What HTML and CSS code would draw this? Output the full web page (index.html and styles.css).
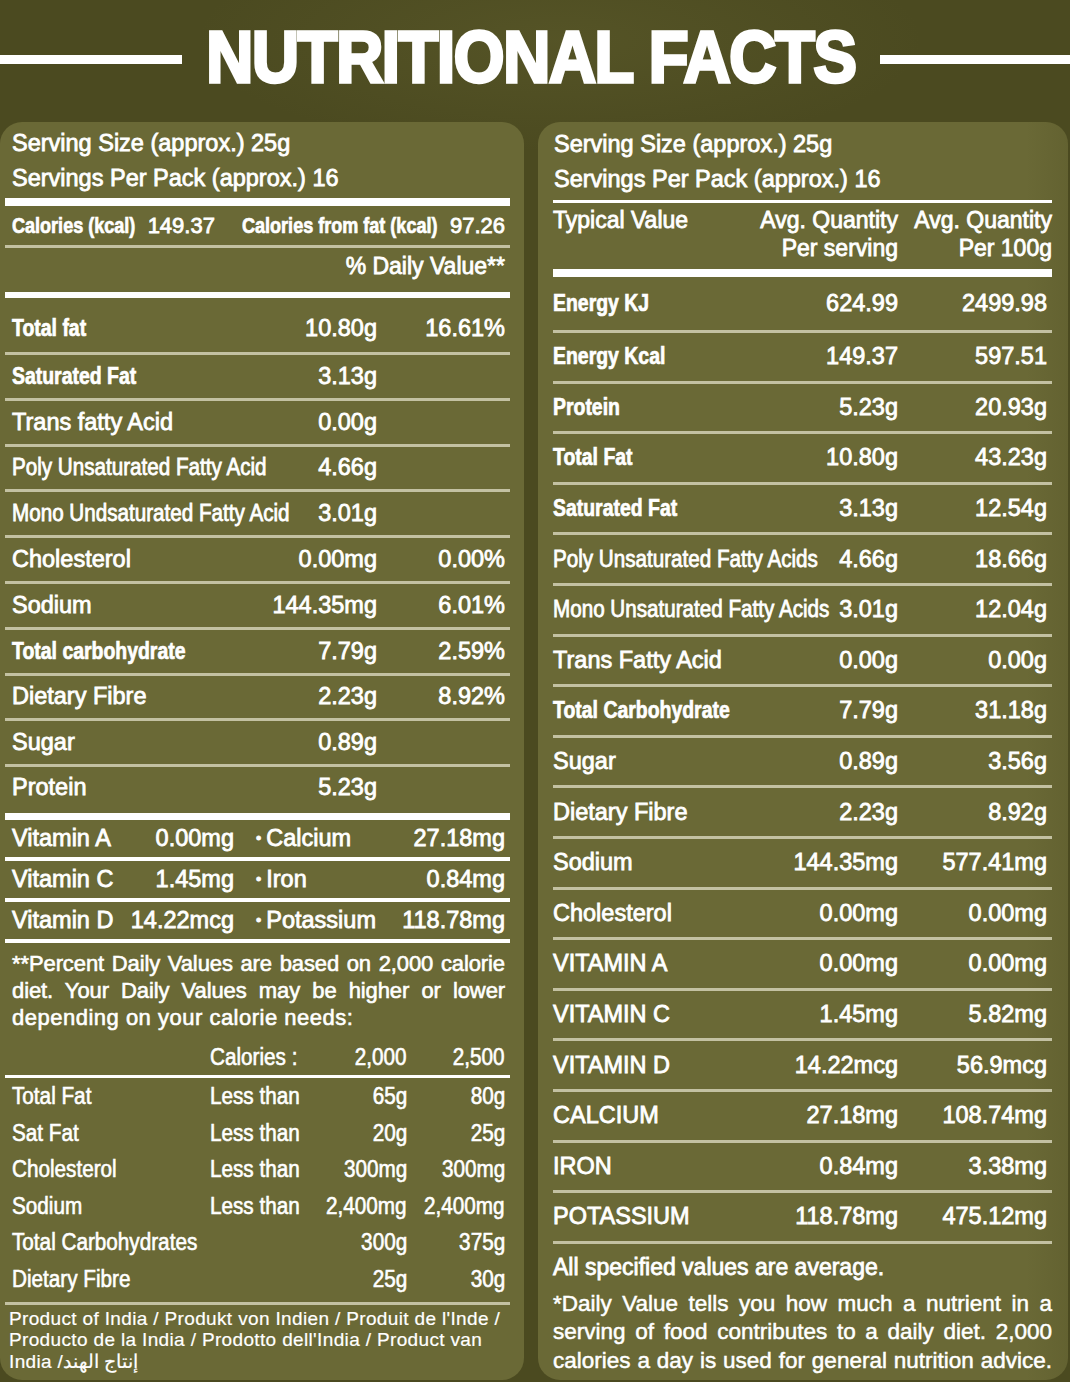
FILE: index.html
```html
<!DOCTYPE html>
<html lang="en">
<head>
<meta charset="utf-8">
<title>Nutritional Facts</title>
<link rel="stylesheet" href="styles.css">
</head>
<body>
<div class="page">
  <header class="title-bar">
    <span class="title-line left"></span>
    <h1 class="title"><span class="title-text">NUTRITIONAL FACTS</span></h1>
    <span class="title-line right"></span>
  </header>

  <main class="panels">
    <section class="panel panel-left">
      <div class="serving">
        <p>Serving Size (approx.) 25g</p>
        <p>Servings Per Pack (approx.) 16</p>
      </div>
      <div class="rule rule-white r8 mt2"></div>
      <div class="cal-line">
        <span><b class="cb cal-a">Calories (kcal)</b>&nbsp; 149.37</span>
        <span><b class="cb cal-b">Calories from fat (kcal)</b>&nbsp; 97.26</span>
      </div>
      <div class="rule rule-thin"></div>
      <div class="dv-head">% Daily Value**</div>
      <div class="rule rule-white r6"></div>

      <div class="nrow first"><span><b class="cb">Total fat</b></span><span>10.80g</span><span>16.61%</span></div>
      <div class="rule rule-thin"></div>
      <div class="nrow"><span><b class="cb">Saturated Fat</b></span><span>3.13g</span><span></span></div>
      <div class="rule rule-thin"></div>
      <div class="nrow"><span>Trans fatty Acid</span><span>0.00g</span><span></span></div>
      <div class="rule rule-thin"></div>
      <div class="nrow"><span><i class="cr">Poly Unsaturated Fatty Acid</i></span><span>4.66g</span><span></span></div>
      <div class="rule rule-thin"></div>
      <div class="nrow"><span><i class="cr">Mono Undsaturated Fatty Acid</i></span><span>3.01g</span><span></span></div>
      <div class="rule rule-thin"></div>
      <div class="nrow"><span>Cholesterol</span><span>0.00mg</span><span>0.00%</span></div>
      <div class="rule rule-thin"></div>
      <div class="nrow"><span>Sodium</span><span>144.35mg</span><span>6.01%</span></div>
      <div class="rule rule-thin"></div>
      <div class="nrow"><span><b class="cb">Total carbohydrate</b></span><span>7.79g</span><span>2.59%</span></div>
      <div class="rule rule-thin"></div>
      <div class="nrow"><span>Dietary Fibre</span><span>2.23g</span><span>8.92%</span></div>
      <div class="rule rule-thin"></div>
      <div class="nrow"><span>Sugar</span><span>0.89g</span><span></span></div>
      <div class="rule rule-thin"></div>
      <div class="nrow last"><span>Protein</span><span>5.23g</span><span></span></div>
      <div class="rule rule-white r7"></div>

      <div class="vrow"><span>Vitamin A</span><span class="v">0.00mg</span><span class="m"><i class="dot">•</i>Calcium</span><span class="v">27.18mg</span></div>
      <div class="rule rule-white r4"></div>
      <div class="vrow"><span>Vitamin C</span><span class="v">1.45mg</span><span class="m"><i class="dot">•</i>Iron</span><span class="v">0.84mg</span></div>
      <div class="rule rule-white r4"></div>
      <div class="vrow"><span>Vitamin D</span><span class="v">14.22mcg</span><span class="m"><i class="dot">•</i>Potassium</span><span class="v">118.78mg</span></div>
      <div class="rule rule-white r4"></div>

      <div class="footnote">
        <div class="jl">**Percent Daily Values are based on 2,000 calorie</div>
        <div class="jl">diet. Your Daily Values may be higher or lower</div>
        <div class="last-line">depending on your calorie needs:</div>
      </div>

      <div class="ctable">
        <div class="crow head"><span></span><span><i class="cc">Calories :</i></span><span class="v"><i class="cc">2,000</i></span><span class="v"><i class="cc">2,500</i></span></div>
        <div class="rule rule-white r3"></div>
        <div class="crow"><span><i class="cc">Total Fat</i></span><span><i class="cc">Less than</i></span><span class="v"><i class="cc">65g</i></span><span class="v"><i class="cc">80g</i></span></div>
        <div class="crow"><span><i class="cc">Sat Fat</i></span><span><i class="cc">Less than</i></span><span class="v"><i class="cc">20g</i></span><span class="v"><i class="cc">25g</i></span></div>
        <div class="crow"><span><i class="cc">Cholesterol</i></span><span><i class="cc">Less than</i></span><span class="v"><i class="cc">300mg</i></span><span class="v"><i class="cc">300mg</i></span></div>
        <div class="crow"><span><i class="cc">Sodium</i></span><span><i class="cc">Less than</i></span><span class="v"><i class="cc">2,400mg</i></span><span class="v"><i class="cc">2,400mg</i></span></div>
        <div class="crow"><span class="wide"><i class="cc">Total Carbohydrates</i></span><span class="v"><i class="cc">300g</i></span><span class="v"><i class="cc">375g</i></span></div>
        <div class="crow"><span class="wide"><i class="cc">Dietary Fibre</i></span><span class="v"><i class="cc">25g</i></span><span class="v"><i class="cc">30g</i></span></div>
      </div>
      <div class="rule rule-thin mt4"></div>
      <div class="origin">
        <div>Product of India / Produkt von Indien / Produit de l'Inde /</div>
        <div>Producto de la India / Prodotto dell'India / Product van</div>
        <div>India /<span dir="rtl">إنتاج الهند</span></div>
      </div>
    </section>

    <section class="panel panel-right">
      <div class="serving">
        <p>Serving Size (approx.) 25g</p>
        <p>Servings Per Pack (approx.) 16</p>
      </div>
      <div class="rule rule-white r3 mt3"></div>
      <div class="thead">
        <span>Typical Value</span>
        <span class="v">Avg. Quantity<br>Per serving</span>
        <span class="v">Avg. Quantity<br>Per 100g</span>
      </div>
      <div class="rule rule-white r8 mt7"></div>

      <div class="trow first"><span><b class="cb">Energy KJ</b></span><span>624.99</span><span>2499.98</span></div>
      <div class="rule rule-thin"></div>
      <div class="trow"><span><b class="cb">Energy Kcal</b></span><span>149.37</span><span>597.51</span></div>
      <div class="rule rule-thin"></div>
      <div class="trow"><span><b class="cb">Protein</b></span><span>5.23g</span><span>20.93g</span></div>
      <div class="rule rule-thin"></div>
      <div class="trow"><span><b class="cb">Total Fat</b></span><span>10.80g</span><span>43.23g</span></div>
      <div class="rule rule-thin"></div>
      <div class="trow"><span><b class="cb">Saturated Fat</b></span><span>3.13g</span><span>12.54g</span></div>
      <div class="rule rule-thin"></div>
      <div class="trow"><span><i class="cr">Poly Unsaturated Fatty Acids</i></span><span>4.66g</span><span>18.66g</span></div>
      <div class="rule rule-thin"></div>
      <div class="trow"><span><i class="cr">Mono Unsaturated Fatty Acids</i></span><span>3.01g</span><span>12.04g</span></div>
      <div class="rule rule-thin"></div>
      <div class="trow"><span>Trans Fatty Acid</span><span>0.00g</span><span>0.00g</span></div>
      <div class="rule rule-thin"></div>
      <div class="trow"><span><b class="cb">Total Carbohydrate</b></span><span>7.79g</span><span>31.18g</span></div>
      <div class="rule rule-thin"></div>
      <div class="trow"><span>Sugar</span><span>0.89g</span><span>3.56g</span></div>
      <div class="rule rule-thin"></div>
      <div class="trow"><span>Dietary Fibre</span><span>2.23g</span><span>8.92g</span></div>
      <div class="rule rule-thin"></div>
      <div class="trow"><span>Sodium</span><span>144.35mg</span><span>577.41mg</span></div>
      <div class="rule rule-thin"></div>
      <div class="trow"><span>Cholesterol</span><span>0.00mg</span><span>0.00mg</span></div>
      <div class="rule rule-thin"></div>
      <div class="trow"><span>VITAMIN A</span><span>0.00mg</span><span>0.00mg</span></div>
      <div class="rule rule-thin"></div>
      <div class="trow"><span>VITAMIN C</span><span>1.45mg</span><span>5.82mg</span></div>
      <div class="rule rule-thin"></div>
      <div class="trow"><span>VITAMIN D</span><span>14.22mcg</span><span>56.9mcg</span></div>
      <div class="rule rule-thin"></div>
      <div class="trow"><span>CALCIUM</span><span>27.18mg</span><span>108.74mg</span></div>
      <div class="rule rule-thin"></div>
      <div class="trow"><span>IRON</span><span>0.84mg</span><span>3.38mg</span></div>
      <div class="rule rule-thin"></div>
      <div class="trow"><span>POTASSIUM</span><span>118.78mg</span><span>475.12mg</span></div>
      <div class="rule rule-thin"></div>

      <p class="avg">All specified values are average.</p>
      <div class="dvnote">
        <div class="jl">*Daily Value tells you how much a nutrient in a</div>
        <div class="jl">serving of food contributes to a daily diet. 2,000</div>
        <div class="jl">calories a day is used for general nutrition advice.</div>
      </div>
    </section>
  </main>
</div>
</body>
</html>
```

FILE: styles.css
```css
* { box-sizing: border-box; }

html, body {
  margin: 0;
  padding: 0;
}

body {
  width: 1070px;
  height: 1382px;
  overflow: hidden;
  background: #4b4a20;
  color: #ffffff;
  font-family: "Liberation Sans", Arial, sans-serif;
}

.page {
  height: 1382px;
  background:
    radial-gradient(ellipse 520px 160px at 560px 40px, rgba(120, 118, 60, 0.22), rgba(0, 0, 0, 0) 70%),
    #4b4a20;
}

/* ---------- title ---------- */
.title-bar {
  height: 122px;
  display: flex;
  align-items: center;
  padding-bottom: 8px;
}

.title-line {
  height: 9px;
  background: #ffffff;
  margin-top: 4px;
}
.title-line.left { width: 182px; }
.title-line.right { flex: 1; }

.title {
  margin: 0 15px;
  width: 668px;
  display: flex;
  justify-content: center;
  font-family: "Liberation Sans", Arial, sans-serif;
  font-weight: 700;
  font-size: 74px;
  line-height: 1;
  white-space: nowrap;
}
.title-text {
  display: inline-block;
  letter-spacing: -1.5px;
  -webkit-text-stroke: 3.5px #ffffff;
  transform: scale(0.88, 0.98);
  transform-origin: center;
}

/* ---------- panels ---------- */
.panels {
  display: grid;
  grid-template-columns: 524px 530px;
  column-gap: 14px;
}

.panel {
  height: 1258px;
  background: #6a6936;
  border-radius: 22px;
  -webkit-text-stroke: 0.8px #ffffff;
  white-space: nowrap;
}

.panel-left {
  padding: 0 14px 0 5px;
}

.panel-right {
  padding: 0 16px 0 15px;
  background:
    linear-gradient(90deg, rgba(0,0,0,0) 0%, rgba(0,0,0,0) 92%, rgba(60,58,20,0.15) 100%),
    #6a6936;
}

p { margin: 0; }

.serving {
  font-size: 23.5px;
  line-height: 35px;
}
.panel-left .serving { padding: 4px 0 0 7px; }
.panel-right .serving { padding: 5px 0 0 1px; }

/* rules */
.rule { width: 100%; }
.rule-white { background: #ffffff; }
.rule-thin { height: 3px; background: #c3c1a2; }
.r3 { height: 3px; }
.r4 { height: 4px; }
.r6 { height: 6px; }
.r7 { height: 7px; }
.r8 { height: 8px; }
.mt2 { margin-top: 2px; }
.mt3 { margin-top: 3px; }
.mt4 { margin-top: 4px; }
.mt7 { margin-top: 7px; }

/* condensed text, made from Liberation Sans scaled horizontally */
.cb, .cr, .cc {
  display: inline-block;
  font-style: normal;
  white-space: nowrap;
  transform-origin: left center;
}
.cb {
  font-weight: 700;
  font-size: 23px;
  -webkit-text-stroke: 0.7px #ffffff;
  transform: scaleX(0.845);
}
.cr {
  font-weight: 400;
  font-size: 23.5px;
  transform: scaleX(0.878);
}
.cc {
  font-weight: 400;
  font-size: 23px;
  transform: scaleX(0.9);
}
.v .cc { transform-origin: right center; }

/* left: calories */
.cal-line {
  height: 39px;
  display: flex;
  justify-content: space-between;
  align-items: center;
  padding: 0 5px 0 7px;
  font-size: 22px;
}
.cal-line .cb {
  font-size: 22px;
  transform: scaleX(0.82);
}
.cal-line .cal-a { margin-right: -27px; }
.cal-line .cal-b { margin-right: -43px; }

.dv-head {
  height: 44px;
  padding: 0 5px 8px 0;
  display: flex;
  align-items: center;
  justify-content: flex-end;
  font-size: 23px;
}

.nrow {
  height: 42.8px;
  display: grid;
  grid-template-columns: minmax(0, 1fr) auto 128px;
  align-items: center;
  padding: 0 5px 0 7px;
  font-size: 23.5px;
}
.nrow span:nth-child(2),
.nrow span:nth-child(3) { text-align: right; }
.nrow.first { height: 54px; padding-top: 6px; }
.nrow.last { height: 46px; padding-bottom: 6px; }

/* vitamins */
.vrow {
  height: 37px;
  display: grid;
  grid-template-columns: 110px 112px 1fr auto;
  align-items: center;
  padding: 0 5px 0 7px;
  font-size: 23.5px;
}
.vrow .v { text-align: right; }
.vrow .m { padding-left: 22px; }
.dot {
  font-style: normal;
  font-size: 15px;
  margin-right: 5px;
  vertical-align: 3px;
}

.footnote {
  margin-top: 7px;
  padding: 0 5px 0 7px;
  font-size: 22px;
  letter-spacing: -0.1px;
  line-height: 27px;
  -webkit-text-stroke: 0.6px #ffffff;
}
.footnote .last-line { letter-spacing: 0.5px; }
.jl {
  text-align: justify;
  text-align-last: justify;
}

/* calorie table */
.ctable { margin-top: 8px; }
.crow {
  height: 36.6px;
  display: grid;
  grid-template-columns: 198px minmax(0, 1fr) auto 98px;
  align-items: center;
  padding: 0 5px 0 7px;
  -webkit-text-stroke: 0.6px #ffffff;
}
.crow.head { height: 36px; }
.crow .v { text-align: right; }
.crow .wide { grid-column: 1 / 3; }

.origin {
  margin-top: 3px;
  padding: 0 0 0 4px;
  font-size: 19px;
  letter-spacing: 0.35px;
  line-height: 21.5px;
  -webkit-text-stroke: 0.2px #ffffff;
}

/* right table */
.thead {
  margin-top: 3px;
  display: grid;
  grid-template-columns: 1fr auto 154px;
  font-size: 23px;
  line-height: 28px;
}
.thead .v { text-align: right; }

.trow {
  height: 47.6px;
  display: grid;
  grid-template-columns: minmax(0, 1fr) auto 149px;
  align-items: center;
  padding: 0 5px 0 0;
  font-size: 23.5px;
}
.trow span:nth-child(2),
.trow span:nth-child(3) { text-align: right; }
.trow.first { height: 53px; }

.avg {
  margin-top: 9px;
  font-size: 23px;
  line-height: 28px;
}

.dvnote {
  margin-top: 9px;
  font-size: 22.5px;
  line-height: 28.5px;
  -webkit-text-stroke: 0.5px #ffffff;
}
```
